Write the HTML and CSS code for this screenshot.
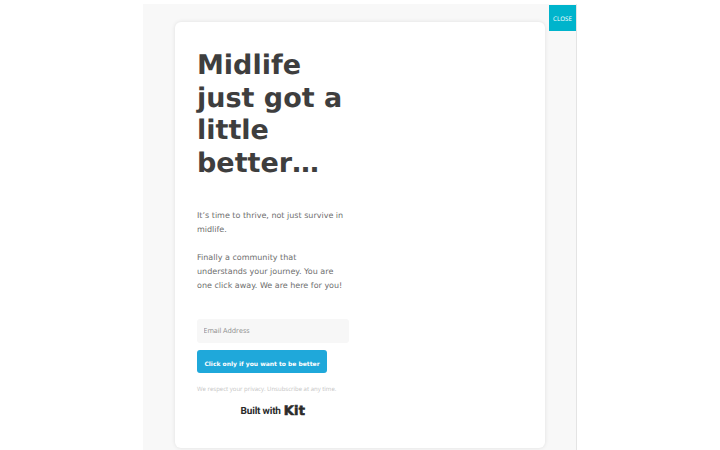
FILE: index.html
```html
<!DOCTYPE html>
<html lang="en">
<head>
<meta charset="utf-8">
<title>Midlife just got a little better</title>
<link rel="stylesheet" href="styles.css">
</head>
<body>
<div class="modal">
  <button class="close">CLOSE</button>
  <main class="card">
    <div class="col">
      <h1 class="title">Midlife just got a little better…</h1>
      <div class="copy">
        <p>It’s time to thrive, not just survive in midlife.</p>
        <p>Finally a community that understands your journey. You are one click away. We are here for you!</p>
      </div>
      <form class="form">
        <input class="email" type="text" placeholder="Email Address">
        <button class="submit" type="button">Click only if you want to be better</button>
      </form>
      <p class="privacy">We respect your privacy. Unsubscribe at any time.</p>
      <div class="built"><span class="built-with">Built with</span><span class="kit">Kit</span></div>
    </div>
  </main>
</div>
</body>
</html>
```
FILE: styles.css
```css
html, body { margin: 0; padding: 0; height: 100%; background: #fff; overflow: hidden; }
body { font-family: "DejaVu Sans", sans-serif; text-rendering: geometricPrecision; }
.modal { position: relative; box-sizing: border-box; width: 434px; height: 446px; margin: 4px 0 0 143px; background: #f8f8f8; border-right: 1px solid #e4e4e4; padding: 18px 31px 0 32px; }
.close { position: absolute; left: 406px; top: 1px; width: 27px; height: 26px; padding: 0; border: 0; background: #00b4cc; color: #fff; font-family: "Open Sans", sans-serif; font-size: 6.2px; text-rendering: geometricPrecision; }
.card { box-sizing: border-box; width: 370px; height: 426px; background: #fff; border-radius: 6px; box-shadow: 0 0 4px rgba(0,0,0,.1); padding: 28px 22px 0; }
.col { width: 152px; }
.title { margin: 0; font-size: 27px; line-height: 32.5px; font-weight: 700; color: #3e3e3e; }
.copy { margin-top: 29px; width: 150px; color: #6e6e6e; font-size: 8px; line-height: 14px; }
.copy p { margin: 0 0 14px; }
.form { margin-top: 26px; display: flex; flex-direction: column; align-items: flex-start; gap: 6.5px; }
.email { box-sizing: border-box; width: 152px; height: 24px; border: 0; border-radius: 3px; background: #f7f7f7; padding: 1px 6.5px 0; font-family: "Open Sans", sans-serif; font-size: 7px; text-rendering: geometricPrecision; }
.email::placeholder { color: #8c8c8c; opacity: 1; }
.submit { box-sizing: border-box; width: 130px; height: 23.5px; border: 0; border-radius: 3px; background: #1fa8da; color: #fff; font-family: "DejaVu Sans", sans-serif; font-weight: 700; font-size: 6px; padding: 6px 0 0; white-space: nowrap; text-rendering: geometricPrecision; }
.privacy { margin: 9.5px 0 0; font-family: "Open Sans", sans-serif; font-size: 6px; line-height: 12px; color: #c4c4c4; white-space: nowrap; }
.built { margin-top: 8px; display: flex; justify-content: center; align-items: center; gap: 3px; width: 152px; color: #2b2b2b; height: 18px; }
.built-with { font-family: "Roboto", sans-serif; font-weight: 700; font-size: 10px; letter-spacing: -.2px; }
.kit { font-family: "DejaVu Sans", sans-serif; font-weight: 700; font-size: 13px; letter-spacing: .3px; -webkit-text-stroke: .6px #2b2b2b; }
```
